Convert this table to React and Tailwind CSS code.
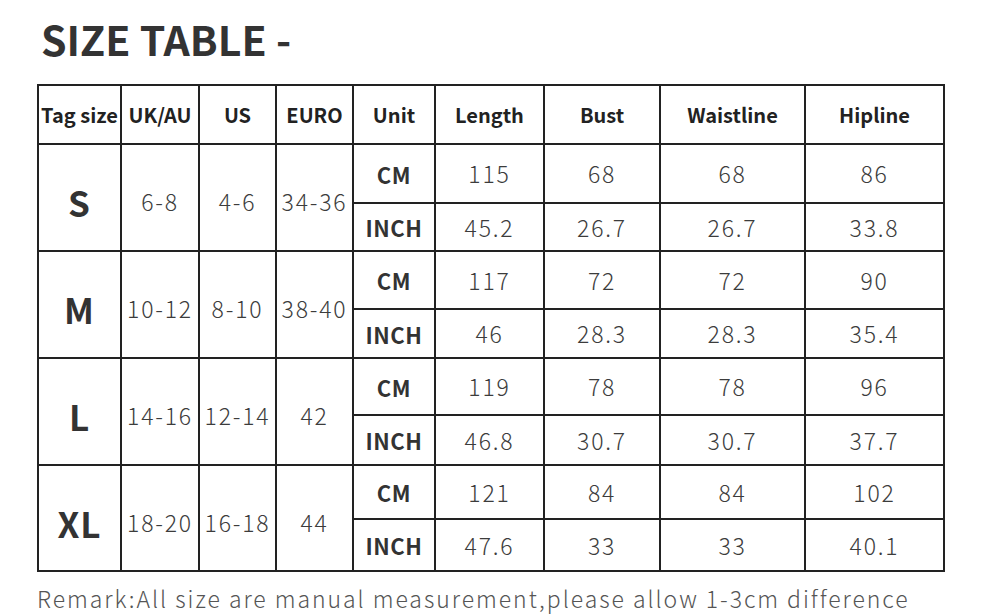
import React from "react";

const font = { fontFamily: '"Noto Sans CJK SC", "Noto Sans", sans-serif' };

const groups = [
  { tag: "S", uk: "6-8", us: "4-6", eu: "34-36", cm: ["115", "68", "68", "86"], inch: ["45.2", "26.7", "26.7", "33.8"], h: ["h-[59px]", "h-[48px]"] },
  { tag: "M", uk: "10-12", us: "8-10", eu: "38-40", cm: ["117", "72", "72", "90"], inch: ["46", "28.3", "28.3", "35.4"], h: ["h-[58px]", "h-[49px]"] },
  { tag: "L", uk: "14-16", us: "12-14", eu: "42", cm: ["119", "78", "78", "96"], inch: ["46.8", "30.7", "30.7", "37.7"], h: ["h-[57px]", "h-[50px]"] },
  { tag: "XL", uk: "18-20", us: "16-18", eu: "44", cm: ["121", "84", "84", "102"], inch: ["47.6", "33", "33", "40.1"], h: ["h-[54px]", "h-[52px]"] },
];

const cell = "border-2 border-[#222] p-0 text-center align-middle";
const num = `${cell} text-[23px] font-light tracking-[1.8px] text-[#3c3c3c]`;
const unit = `${cell} text-[22px] font-bold tracking-[0.6px] text-[#333]`;
const span = `${cell} text-[23px] font-light tracking-[1.8px] text-[#3c3c3c] pt-[8px] whitespace-nowrap`;

export default function App() {
  return (
    <div className="w-[1000px] h-[614px] bg-white overflow-hidden" style={font}>
      <div className="pl-[41px] pt-[18px] text-[41px] leading-none font-bold text-[#333]">SIZE TABLE -</div>
      <table className="ml-[37px] mt-[25px] border-collapse table-fixed w-[906px] leading-none">
        <colgroup>
          <col className="w-[83px]" />
          <col className="w-[78px]" />
          <col className="w-[77px]" />
          <col className="w-[77px]" />
          <col className="w-[82px]" />
          <col className="w-[109px]" />
          <col className="w-[116px]" />
          <col className="w-[145px]" />
          <col className="w-[139px]" />
        </colgroup>
        <tbody>
          <tr className="h-[59px] text-[20px] font-bold text-[#222]">
            <td className={`${cell} whitespace-nowrap`}>Tag size</td>
            <td className={cell}>UK/AU</td>
            <td className={cell}>US</td>
            <td className={cell}>EURO</td>
            <td className={cell}>Unit</td>
            <td className={cell}>Length</td>
            <td className={cell}>Bust</td>
            <td className={cell}>Waistline</td>
            <td className={cell}>Hipline</td>
          </tr>
          {groups.map((g) => (
            <React.Fragment key={g.tag}>
              <tr className={g.h[0]}>
                <td rowSpan={2} className={`${cell} text-[35px] font-bold tracking-[1px] text-[#333] pt-[8px]`}>{g.tag}</td>
                <td rowSpan={2} className={span}>{g.uk}</td>
                <td rowSpan={2} className={span}>{g.us}</td>
                <td rowSpan={2} className={span}>{g.eu}</td>
                <td className={unit}>CM</td>
                {g.cm.map((v, i) => (
                  <td key={i} className={num}>{v}</td>
                ))}
              </tr>
              <tr className={g.h[1]}>
                <td className={unit}>INCH</td>
                {g.inch.map((v, i) => (
                  <td key={i} className={num}>{v}</td>
                ))}
              </tr>
            </React.Fragment>
          ))}
        </tbody>
      </table>
      <div className="pl-[37px] mt-[15px] text-[23px] leading-none tracking-[1.95px] text-[#555] font-light whitespace-nowrap">
        Remark:All size are manual measurement,please allow 1-3cm difference
      </div>
    </div>
  );
}
